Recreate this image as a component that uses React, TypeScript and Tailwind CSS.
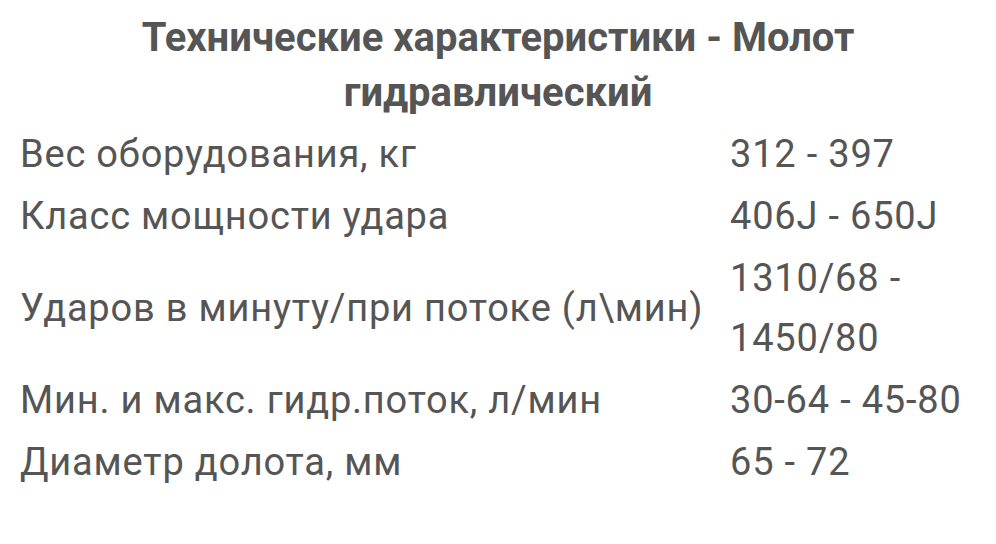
const specs = [
  { label: "Вес оборудования, кг", value: "312 - 397" },
  { label: "Класс мощности удара", value: "406J - 650J" },
  { label: "Ударов в минуту/при потоке (л\\мин)", value: "1310/68 - 1450/80" },
  { label: "Мин. и макс. гидр.поток, л/мин", value: "30-64 - 45-80" },
  { label: "Диаметр долота, мм", value: "65 - 72" },
];

export default function App() {
  return (
    <div className="min-h-[544px] w-[996px] bg-white px-[10px] pt-[10px] text-[#555555] [font-family:Roboto,'Noto_Sans',sans-serif]">
      <h2 className="text-center text-[40px] font-bold leading-[55px]">
        Технические характеристики - Молот
        <br />
        гидравлический
      </h2>
      <table className="mt-[3px] w-full border-collapse text-[38px] leading-[60px] tracking-[0.8px]">
        <tbody>
          {specs.map((s) => (
            <tr key={s.label}>
              <td className="w-[710px] px-[10px] py-px align-middle">{s.label}</td>
              <td className="px-[10px] py-px align-middle">{s.value}</td>
            </tr>
          ))}
        </tbody>
      </table>
    </div>
  );
}
